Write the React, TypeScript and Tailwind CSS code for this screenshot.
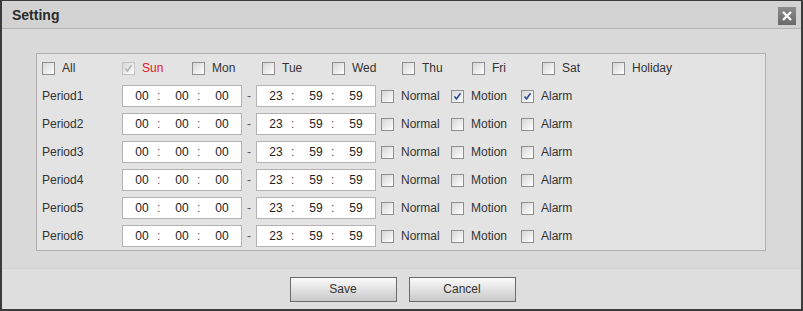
import React from "react";

const days = ["Sun", "Mon", "Tue", "Wed", "Thu", "Fri", "Sat", "Holiday"];
const periods = [1, 2, 3, 4, 5, 6];

const CheckBox = ({ checked, disabled }: { checked?: boolean; disabled?: boolean }) => (
  <span
    className={
      "relative inline-block w-[13px] h-[13px] shrink-0 border bg-gradient-to-br from-[#d6d6d6] to-[#ffffff] " +
      (disabled ? "border-[#c4c4c4]" : "border-[#8f8f8f]")
    }
  >
    {checked && (
      <svg className="absolute left-[1px] top-[1px]" width="9" height="9" viewBox="0 0 9 9">
        <path
          d="M1.5 4.5 L3.5 7 L7.5 1.2"
          fill="none"
          stroke={disabled ? "#b0b0b0" : "#2b4a9b"}
          strokeWidth="1.6"
        />
      </svg>
    )}
  </span>
);

const Check = ({
  label,
  checked,
  disabled,
  red,
}: {
  label: string;
  checked?: boolean;
  disabled?: boolean;
  red?: boolean;
}) => (
  <div className="flex items-center w-[70px] shrink-0">
    <CheckBox checked={checked} disabled={disabled} />
    <span className={"ml-[7px] " + (red ? "text-[#e01b22]" : "text-[#333]")}>{label}</span>
  </div>
);

const TimeBox = ({ values }: { values: string[] }) => (
  <div className="flex items-center w-[120px] h-[22px] border border-[#b3b3b3] bg-white pl-[6px] text-[#222]">
    <span className="w-[26px] text-center">{values[0]}</span>
    <span className="w-[14px] pl-[2px] text-[#555]">:</span>
    <span className="w-[26px] text-center">{values[1]}</span>
    <span className="w-[14px] pl-[2px] text-[#555]">:</span>
    <span className="w-[26px] text-center">{values[2]}</span>
  </div>
);

export default function App() {
  return (
    <div
      className="w-[803px] h-[311px] flex flex-col border-x-2 border-b-2 border-t border-[#3b3b3b] bg-[#d9d9d9] text-[12px] text-[#333]"
      style={{ fontFamily: '"Liberation Sans", Arial, sans-serif' }}
    >
      <div className="h-[28px] flex items-center justify-between pl-[10px] pr-[5px] bg-[#d2d2d2] border-b border-[#b5b5b5]">
        <span className="text-[14px] font-bold text-[#2a2a2a] mt-[2px]">Setting</span>
        <div className="w-[18px] h-[18px] mt-[2px] flex items-center justify-center bg-gradient-to-b from-[#8c8c8c] to-[#6a6a6a]">
          <svg width="10" height="10" viewBox="0 0 10 10">
            <path d="M1 1 L9 9 M9 1 L1 9" stroke="#ffffff" strokeWidth="2.2" />
          </svg>
        </div>
      </div>

      <div className="flex-1 pt-[24px] pl-[34px]">
        <div className="w-[730px] border border-[#b0b0b0] bg-[#e3e3e3] pl-[5px]">
          <div className="h-[28px] flex items-center">
            <div className="flex items-center w-[80px] shrink-0">
              <CheckBox />
              <span className="ml-[7px]">All</span>
            </div>
            {days.map((d) => (
              <Check key={d} label={d} checked={d === "Sun"} disabled={d === "Sun"} red={d === "Sun"} />
            ))}
          </div>
          {periods.map((p) => (
            <div key={p} className="h-[28px] flex items-center">
              <span className="w-[80px] shrink-0">Period{p}</span>
              <TimeBox values={["00", "00", "00"]} />
              <span className="w-[14px] text-center text-[#555]">-</span>
              <TimeBox values={["23", "59", "59"]} />
              <div className="w-[5px]" />
              <Check label="Normal" />
              <Check label="Motion" checked={p === 1} />
              <Check label="Alarm" checked={p === 1} />
            </div>
          ))}
        </div>
      </div>

      <div className="h-[41px] flex items-center justify-center gap-[12px] pl-[2px] border-t border-[#d2d2d2] bg-[#dedede]">
        <button className="w-[107px] h-[25px] border border-[#6b6b6b] bg-gradient-to-b from-[#fbfbfb] to-[#c9c9c9] text-[#333] text-[12px]">
          Save
        </button>
        <button className="w-[107px] h-[25px] border border-[#6b6b6b] bg-gradient-to-b from-[#fbfbfb] to-[#c9c9c9] text-[#333] text-[12px]">
          Cancel
        </button>
      </div>
    </div>
  );
}
